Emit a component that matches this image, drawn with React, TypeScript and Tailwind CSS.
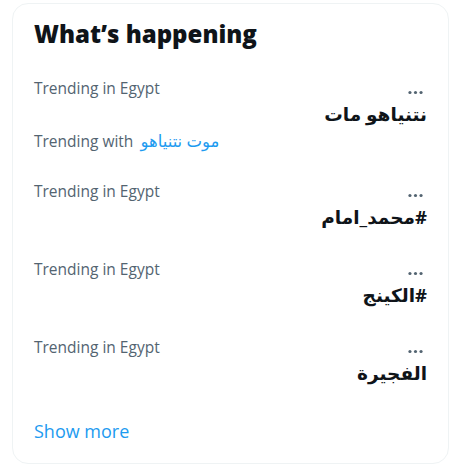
import React from "react";

const font = { fontFamily: '"Open Sans", "DejaVu Sans", sans-serif' };

type Trend = { label: string; title: string; withText?: string };

const trends: Trend[] = [
    { label: "Trending in Egypt", title: "نتنياهو مات", withText: "موت نتنياهو" },
    { label: "Trending in Egypt", title: "#محمد_امام" },
    { label: "Trending in Egypt", title: "#الكينج" },
    { label: "Trending in Egypt", title: "الفجيرة" },
];

function Dots() {
    return (
        <svg viewBox="0 0 24 24" className="w-[19px] h-[19px] text-[#536471]" fill="currentColor">
            <circle cx="5" cy="12" r="2" />
            <circle cx="12" cy="12" r="2" />
            <circle cx="19" cy="12" r="2" />
        </svg>
    );
}

function TrendRow({ trend }: { trend: Trend }) {
    return (
        <div className="px-[21px] py-[15px]">
            <div className="flex items-start justify-between h-[20px]">
                <span className="text-[15.5px] leading-[20px] text-[#536471]">{trend.label}</span>
                <span className="mt-[5px] mr-[2px]"><Dots /></span>
            </div>
            <div dir="rtl" className="mt-[4px] text-[18.5px] leading-[24px] font-bold text-[#0f1419]">
                {trend.title}
            </div>
            {trend.withText && (
                <div className="mt-[5px] text-[15.5px] leading-[20px] text-[#536471]">
                    Trending with <span dir="rtl" className="ml-[3px] text-[16.5px] text-[#1d9bf0]">{trend.withText}</span>
                </div>
            )}
        </div>
    );
}

export default function App() {
    return (
        <div className="min-h-screen bg-white pt-[3px] pl-[12px]" style={font}>
            <div className="w-[437px] border border-[#eff3f4] rounded-[16px] bg-white">
                <h2 className="px-[21px] pt-[16px] text-[24px] leading-[28px] font-extrabold text-[#0f1419]">
                    What’s happening
                </h2>
                <div className="mt-[15px]">
                    {trends.map((t, i) => (
                        <TrendRow key={i} trend={t} />
                    ))}
                </div>
                <div className="px-[21px] pt-[21px] pb-[22px] text-[18px] leading-[20px] text-[#1d9bf0]">
                    Show more
                </div>
            </div>
        </div>
    );
}
